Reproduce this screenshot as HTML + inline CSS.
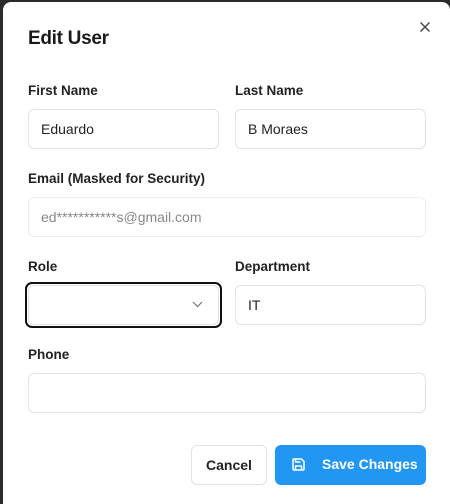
<!DOCTYPE html>
<html style="overflow:hidden"><head><style>
*{box-sizing:border-box;margin:0;padding:0}
html,body{width:450px;height:504px;overflow:hidden}
body{background:#2b2b2b;font-family:"Liberation Sans",sans-serif;position:relative}
.m{position:absolute;left:3px;top:2px;width:447px;height:502px;background:#fff;border-radius:8px 8px 0 0}
.a{position:absolute}
h1{position:absolute;left:28px;top:28px;font-size:19px;font-weight:600;color:#1a1a1a;letter-spacing:-0.3px}
.l{position:absolute;font-size:13.5px;font-weight:600;color:#222}
.i{position:absolute;height:40px;border:1px solid #e2e2e2;border-radius:6px;font-size:14px;color:#222;padding-left:12px;line-height:38px}
.b{position:absolute;top:445px;height:40px;border-radius:6px;font-size:14px;font-weight:600;line-height:39px;text-align:center}
</style></head><body>
<div class="m"></div>
<h1>Edit User</h1>
<svg class="a" style="left:419px;top:21px" width="12" height="12" viewBox="0 0 12 12"><path d="M1.5 1.5L10.5 10.5M10.5 1.5L1.5 10.5" stroke="#444" stroke-width="1.4"/></svg>
<div class="l" style="left:28px;top:83px">First Name</div>
<div class="l" style="left:235px;top:83px">Last Name</div>
<div class="i" style="left:28px;top:109px;width:191px">Eduardo</div>
<div class="i" style="left:235px;top:109px;width:191px">B Moraes</div>
<div class="l" style="left:28px;top:171px">Email (Masked for Security)</div>
<div class="i" style="left:28px;top:197px;width:398px;color:#888;border-color:#ececec">ed***********s@gmail.com</div>
<div class="l" style="left:28px;top:259px">Role</div>
<div class="a" style="left:25px;top:282px;width:197px;height:46px;border:2px solid #111;border-radius:7px"></div>
<div class="i" style="left:28px;top:285px;width:191px"></div>
<svg class="a" style="left:192px;top:301px" width="11" height="7" viewBox="0 0 11 7"><path d="M1 1L5.5 5.5L10 1" stroke="#777" stroke-width="1.2" fill="none"/></svg>
<div class="l" style="left:235px;top:259px">Department</div>
<div class="i" style="left:235px;top:285px;width:191px">IT</div>
<div class="l" style="left:28px;top:347px">Phone</div>
<div class="i" style="left:28px;top:373px;width:398px"></div>
<div class="b" style="left:191px;width:76px;border:1px solid #e2e2e2;color:#222">Cancel</div>
<div class="b" style="left:275px;width:151px;background:#2196f3;color:#fff;padding-left:47px;text-align:left">Save Changes</div>
<svg class="a" style="left:291px;top:457px" width="15" height="15" viewBox="0 0 15 15" fill="none" stroke="#fff" stroke-width="1.5" stroke-linejoin="round"><path d="M2 3a1 1 0 0 1 1-1h7.5L13 4.5V12a1 1 0 0 1-1 1H3a1 1 0 0 1-1-1z"/><path d="M4.5 13V9h6v4M4.5 2v3h5"/></svg>
</body></html>
